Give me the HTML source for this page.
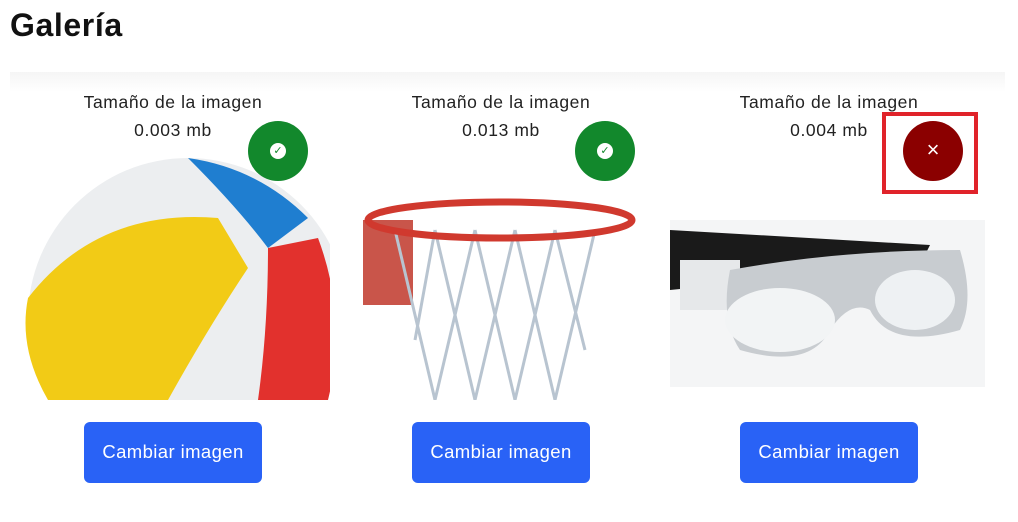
<!DOCTYPE html>
<html><head><meta charset="utf-8"><style>
body{margin:0;width:1018px;height:522px;background:#fff;font-family:"Liberation Sans",sans-serif;position:relative;overflow:hidden}
.a{position:absolute}
h1{position:absolute;left:10px;top:7px;margin:0;font-size:32px;font-weight:bold;color:#111;letter-spacing:0.6px}
.t{position:absolute;width:260px;text-align:center;font-size:17.5px;color:#222;line-height:28px;letter-spacing:0.6px}
.btn{position:absolute;top:422px;width:178px;height:61px;background:#2962f6;border-radius:6px;color:#fff;font-size:18.5px;text-align:center;line-height:60px;letter-spacing:0.4px}
.c{position:absolute;width:60px;height:60px;border-radius:50%}
</style></head><body>
<h1>Galería</h1>
<div class="a" style="left:10px;top:72px;width:995px;height:20px;background:linear-gradient(#f5f5f5,#fff)"></div>
<div class="t" style="left:43px;top:88px">Tamaño de la imagen<br>0.003 mb</div>
<div class="t" style="left:371px;top:88px">Tamaño de la imagen<br>0.013 mb</div>
<div class="t" style="left:699px;top:88px">Tamaño de la imagen<br>0.004 mb</div>

<!-- ball -->
<svg class="a" style="left:18px;top:148px" width="312" height="252" viewBox="0 0 312 252">
<defs><clipPath id="b"><rect width="312" height="252"/></clipPath></defs>
<g clip-path="url(#b)">
<circle cx="170" cy="170" r="160" fill="#eceef0"/>
<path d="M170 10 Q240 20 290 70 L250 100 Q220 60 170 10Z" fill="#1f7ed0"/>
<path d="M10 150 Q80 60 200 70 L230 120 Q190 180 150 252 L30 252 Q0 200 10 150Z" fill="#f2cb16"/>
<path d="M250 100 L300 90 Q330 170 310 252 L240 252 Q250 180 250 100Z" fill="#e2312d"/>
</g></svg>
<div class="c" style="left:248px;top:121px;background:#12882c"></div>
<div class="a" style="left:270px;top:143px;width:16px;height:16px;background:#fff;border-radius:50%;color:#12882c;font-size:11px;text-align:center;line-height:16px">✓</div>

<!-- hoop -->
<svg class="a" style="left:355px;top:190px" width="285" height="210" viewBox="0 0 285 210">
<rect x="8" y="30" width="50" height="85" fill="#c9554a"/>
<g stroke="#b8c4d0" stroke-width="3" fill="none">
<path d="M40 40 L80 210 M80 40 L120 210 M120 40 L160 210 M160 40 L200 210 M200 40 L230 160 M240 40 L200 210 M200 40 L160 210 M160 40 L120 210 M120 40 L80 210 M80 40 L60 150"/>
</g>
<ellipse cx="145" cy="30" rx="132" ry="18" fill="none" stroke="#d0392e" stroke-width="7"/>
</svg>
<div class="c" style="left:575px;top:121px;background:#12882c"></div>
<div class="a" style="left:597px;top:143px;width:16px;height:16px;background:#fff;border-radius:50%;color:#12882c;font-size:11px;text-align:center;line-height:16px">✓</div>

<!-- glasses -->
<div class="a" style="left:670px;top:220px;width:315px;height:167px;background:#f4f5f6"></div>
<svg class="a" style="left:670px;top:220px" width="315" height="167" viewBox="0 0 315 167">
<path d="M0 10 L260 25 L250 45 L0 70Z" fill="#1a1a1a"/>
<rect x="10" y="40" width="60" height="50" fill="#e6e8ea"/>
<path d="M60 50 Q170 30 290 30 Q305 80 290 110 Q220 130 200 90 Q180 80 160 110 Q140 150 70 130 Q50 100 60 50Z" fill="#c8ccd0"/>
<ellipse cx="110" cy="100" rx="55" ry="32" fill="#f2f4f5"/>
<ellipse cx="245" cy="80" rx="40" ry="30" fill="#eef1f3"/>
</svg>
<div class="a" style="left:882px;top:112px;width:88px;height:74px;border:4px solid #e0232a"></div>
<div class="c" style="left:903px;top:121px;background:#8b0000;color:#fff;font-size:22px;text-align:center;line-height:58px">×</div>

<div class="btn" style="left:84px">Cambiar imagen</div>
<div class="btn" style="left:412px">Cambiar imagen</div>
<div class="btn" style="left:740px">Cambiar imagen</div>
</body></html>
